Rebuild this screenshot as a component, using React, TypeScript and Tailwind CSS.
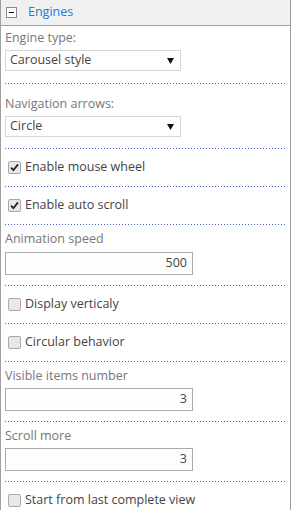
import React from 'react';

const Dots = () => (
  <div className="mx-1 h-px bg-[repeating-linear-gradient(to_right,#3f62c9_0_1px,transparent_1px_3px)]" />
);

const Select = ({ value }: { value: string }) => (
  <div className="ml-1 flex h-[21px] w-[176px] items-center justify-between border border-[#d6d6d6] bg-white pl-[4px] pr-[6px] text-[12.5px] text-[#444]">
    <span>{value}</span>
    <svg width="7" height="6" viewBox="0 0 7 6">
      <path d="M0 0H7L3.5 6Z" fill="#111" />
    </svg>
  </div>
);

const NumberInput = ({ value }: { value: string }) => (
  <div className="ml-1 flex h-[23px] w-[188px] items-center justify-end border border-[#ababab] bg-[#fdfdfd] pr-[5px] text-[12.5px] text-[#444]">
    {value}
  </div>
);

const Check = ({ label, checked }: { label: string; checked?: boolean }) => (
  <div className="flex h-[37px] items-center pl-[7px] text-[12.5px] text-[#444]">
    <span className="mr-[4px] flex h-[13px] w-[13px] items-center justify-center rounded-[2px] border border-[#a9a9a9] bg-[#e8e8e8]">
      {checked && (
        <svg width="9" height="9" viewBox="0 0 9 9">
          <path d="M1 4.6L3.4 7.2L8 1.4" fill="none" stroke="#222" strokeWidth="1.8" />
        </svg>
      )}
    </span>
    <span>{label}</span>
  </div>
);

const Label = ({ text }: { text: string }) => (
  <div className="h-5 px-1 text-[12.5px] leading-5 text-[#777]">{text}</div>
);

export default function App() {
  return (
    <div className="h-[510px] w-[291px] border-x border-[#a0a0a0] bg-white font-['Open_Sans',sans-serif]">
      {/* Header */}
      <div className="flex h-[26px] items-center border-b border-[#a0a0a0] bg-[#f0f0f0]">
        <span className="ml-[5px] flex h-[11px] w-[11px] items-center justify-center border border-[#8a8a8a] bg-white">
          <span className="h-px w-[5px] bg-black" />
        </span>
        <span className="ml-[11px] text-[12.5px] text-[#1f7ad6]">Engines</span>
      </div>

      <div className="pt-[2px] pb-[12px]">
        <Label text="Engine type:" />
        <div className="mt-[2px]">
          <Select value="Carousel style" />
        </div>
      </div>
      <Dots />

      <div className="pt-[10px] pb-[11px]">
        <Label text="Navigation arrows:" />
        <div className="mt-[2px]">
          <Select value="Circle" />
        </div>
      </div>
      <Dots />

      <Check label="Enable mouse wheel" checked />
      <Dots />
      <Check label="Enable auto scroll" checked />
      <Dots />

      <div className="pt-[4px] pb-[10px]">
        <Label text="Animation speed" />
        <div className="mt-[3px]">
          <NumberInput value="500" />
        </div>
      </div>
      <Dots />

      <Check label="Display verticaly" />
      <Dots />
      <Check label="Circular behavior" />
      <Dots />

      <div className="pt-[4px] pb-[10px]">
        <Label text="Visible items number" />
        <div className="mt-[2px]">
          <NumberInput value="3" />
        </div>
      </div>
      <Dots />

      <div className="pt-[4px] pb-[10px]">
        <Label text="Scroll more" />
        <div className="mt-[2px]">
          <NumberInput value="3" />
        </div>
      </div>
      <Dots />

      <Check label="Start from last complete view" />
    </div>
  );
}
